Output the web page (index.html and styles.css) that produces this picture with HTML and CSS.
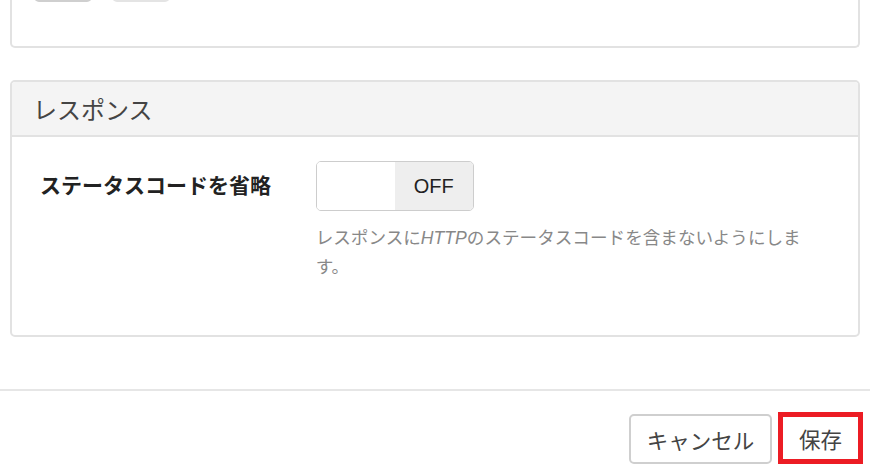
FILE: index.html
```html
<!DOCTYPE html>
<html lang="ja">
<head>
<meta charset="utf-8">
<link rel="stylesheet" href="styles.css">
</head>
<body>
<div class="page">
  <div class="panel panel-top">
    <div class="top-buttons">
      <span class="mini-btn mini-btn-dark"></span>
      <span class="mini-btn"></span>
    </div>
  </div>

  <div class="panel panel-response">
    <div class="panel-header">レスポンス</div>
    <div class="panel-body">
      <div class="form-row">
        <div class="form-label">ステータスコードを省略</div>
        <div class="form-control">
          <div class="toggle">
            <span class="toggle-on"></span>
            <span class="toggle-off">OFF</span>
          </div>
          <p class="help">レスポンスに<i>HTTP</i>のステータスコードを含まないようにします。</p>
        </div>
      </div>
    </div>
  </div>

  <div class="footer">
    <button class="btn btn-cancel">キャンセル</button>
    <button class="btn btn-save">保存</button>
  </div>
</div>
</body>
</html>
```

FILE: styles.css
```css
* { box-sizing: border-box; }
html, body {
  margin: 0;
  padding: 0;
  background: #fff;
  font-family: "Noto Sans CJK JP", "Noto Sans", sans-serif;
  color: #333;
  overflow: hidden;
}
.page {
  width: 870px;
  height: 468px;
  overflow: hidden;
}
.panel {
  margin: 0 10px;
  border: 2px solid #e2e2e2;
  border-radius: 5px;
  background: #fff;
}
.panel-top {
  display: flow-root;
  margin-top: -20px;
  height: 68px;
  border-top: none;
  border-top-left-radius: 0;
  border-top-right-radius: 0;
}
.top-buttons {
  display: flex;
  gap: 20px;
  padding-left: 22px;
  margin-top: -18px;
}
.mini-btn {
  display: block;
  width: 58px;
  height: 40px;
  border: 2px solid #e4e4e4;
  border-radius: 5px;
}
.mini-btn-dark { border-color: #cfcfcf; }
.panel-response {
  margin-top: 32px;
  height: 257px;
}
.panel-header {
  height: 55px;
  background: #f4f4f4;
  border-bottom: 2px solid #e2e2e2;
  border-radius: 3px 3px 0 0;
  padding-left: 21px;
  font-size: 24px;
  line-height: 54px;
  color: #444;
}
.panel-body {
  padding: 24px 20px 0 28px;
}
.form-row {
  display: flex;
}
.form-label {
  width: 277px;
  font-size: 21px;
  font-weight: bold;
  color: #222;
  padding-top: 8px;
}
.form-control {
  width: 525px;
}
.toggle {
  display: flex;
  width: 158px;
  height: 50px;
  border: 1px solid #cdcdcd;
  border-radius: 5px;
  overflow: hidden;
}
.toggle-on {
  width: 78px;
  background: #fff;
}
.toggle-off {
  flex: 1;
  background: #eee;
  font-family: "Liberation Sans", "Noto Sans", sans-serif;
  font-size: 20px;
  line-height: 48px;
  text-align: center;
  color: #222;
}
.help {
  margin: 12px 0 0;
  width: 512px;
  font-size: 17.6px;
  line-height: 28px;
  color: #888;
}
.help i {
  font-family: "Liberation Sans", "Noto Sans", sans-serif;
  font-style: italic;
}
.footer {
  margin-top: 52px;
  border-top: 2px solid #e6e6e6;
  display: flex;
  justify-content: flex-end;
  align-items: flex-start;
  gap: 6px;
  padding: 21px 7px 0 0;
}
.btn {
  font-family: "Noto Sans CJK JP", "Noto Sans", sans-serif;
  background: #fff;
  color: #444;
  font-size: 21.5px;
  cursor: pointer;
}
.btn-cancel {
  margin-top: 2px;
  width: 143px;
  height: 50px;
  border: 2px solid #cfcfcf;
  border-radius: 5px;
}
.btn-save {
  width: 85px;
  height: 52px;
  border: 5px solid #ec1c24;
  border-radius: 0;
}
```
